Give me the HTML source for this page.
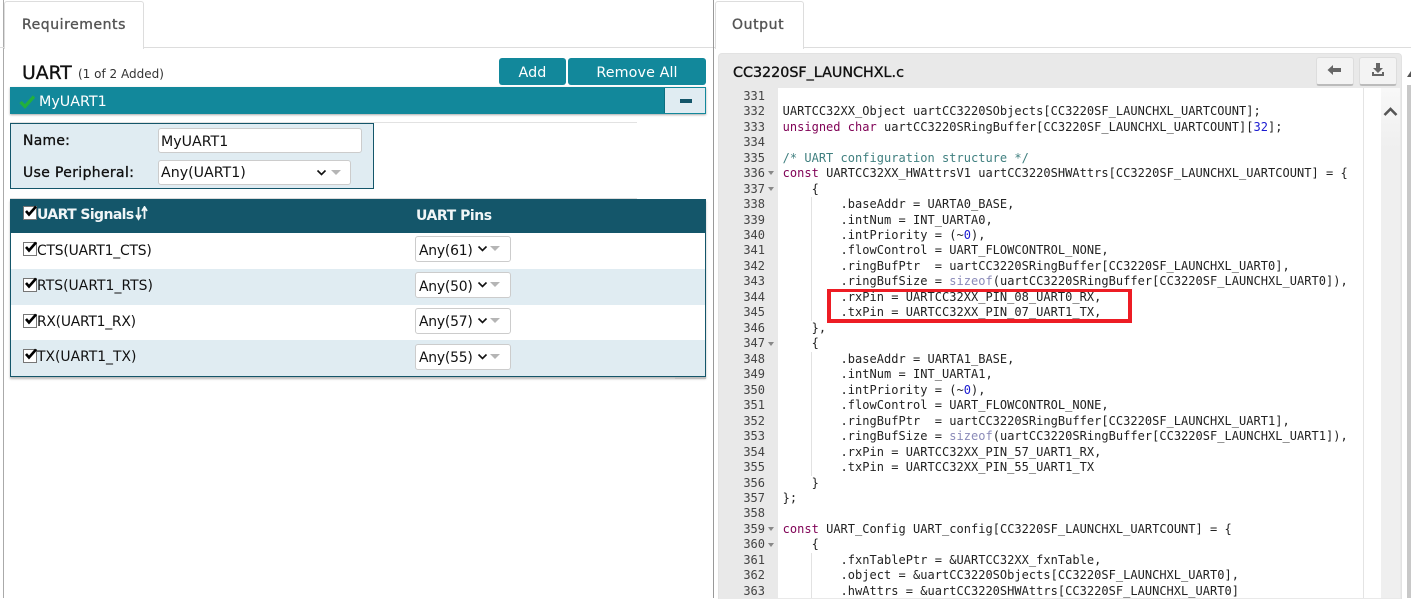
<!DOCTYPE html>
<html><head><meta charset="utf-8"><style>
html,body{margin:0;padding:0;background:#fff}
body{width:1411px;height:598px;overflow:hidden;position:relative;font-family:"DejaVu Sans","Liberation Sans",sans-serif;color:#111}
.a{position:absolute;white-space:nowrap}
.t{font-size:13.9px;line-height:20px;color:#111}
.m{-webkit-text-stroke:.35px currentColor}
.btn{background:#12889b;color:#fff;text-align:center;font-size:14.3px;line-height:31px;height:27px;top:58px;border-radius:3px;letter-spacing:.1px}
.sel{background:#fff;border:1px solid #ccc;border-radius:3px;box-sizing:border-box}
.sel i{position:absolute;top:8px;width:0;height:0;border-left:5px solid transparent;border-right:5px solid transparent;border-top:5px solid #b5b5b5}
.sel svg{position:absolute;top:7px}
.cb{position:absolute;width:12px;height:12px;border:1px solid #767676;background:#fff}
.cb svg{position:absolute;left:0;top:-3px}
.ln,.cd{position:absolute;font-family:"DejaVu Sans Mono","Liberation Mono",monospace;font-size:12px;line-height:15.47px;white-space:pre}
.ln{left:718px;top:88.8px;width:47px;text-align:right;color:#444}
.cd{left:782.6px;top:88.8px;color:#222;letter-spacing:.02px}
.k{color:#7f0055}.c{color:#3f7f7f}.n{color:#1a1ad0}.s{color:#8a8ab8}
.fold{width:0;height:0;border-left:3px solid transparent;border-right:3px solid transparent;border-top:4px solid #888;left:768px}
.g{width:1px;background:#e2e2e2}
</style></head><body>

<div class="a" style="left:3px;top:0;width:1px;height:598px;background:#aaa"></div>
<div class="a" style="left:0;top:47px;width:714px;height:1px;background:#ddd"></div>
<div class="a" style="left:713px;top:0;width:1px;height:598px;background:#999"></div>
<div class="a" style="left:714px;top:47px;width:697px;height:1px;background:#ddd"></div>

<div class="a" style="left:4px;top:1px;width:138px;height:47px;background:#fff;border:1px solid #ddd;border-bottom:none;border-radius:3px 3px 0 0"></div>
<div class="a m" style="left:22px;top:15px;font-size:14px;line-height:20px;color:#555;letter-spacing:.55px">Requirements</div>
<div class="a" style="left:715px;top:1px;width:87px;height:47px;background:#fff;border:1px solid #ddd;border-bottom:none;border-radius:3px 3px 0 0"></div>
<div class="a m" style="left:732px;top:15px;font-size:14px;line-height:20px;color:#555;letter-spacing:.6px">Output</div>

<div class="a m" style="left:22px;top:62px;font-size:18.8px;line-height:24px;color:#111">UART</div>
<div class="a" style="left:78px;top:65px;font-size:12px;line-height:18px;color:#333">(1 of 2 Added)</div>
<div class="a btn" style="left:499px;width:67px">Add</div>
<div class="a btn" style="left:568px;width:138px">Remove All</div>

<div class="a" style="left:10px;top:87px;width:696px;height:27px;background:#12889b;box-shadow:0 1px 2px #aaa"></div>
<svg class="a" style="left:19px;top:94px" width="17" height="15" viewBox="0 0 17 15"><path d="M1.5 8 L6 12.5 L15 2.5" fill="none" stroke="#22b03c" stroke-width="3.2"/></svg>
<div class="a" style="left:39px;top:92px;font-size:14.3px;line-height:20px;color:#fff">MyUART1</div>
<div class="a" style="left:664px;top:88px;width:41px;height:25px;background:#e0ecf2;border-left:1px solid #0d6f80;box-sizing:border-box"></div>
<div class="a" style="left:680px;top:99px;width:12px;height:4px;background:#14566a"></div>

<div class="a" style="left:10px;top:122px;width:627px;height:1px;background:#e2e2e2"></div>
<div class="a" style="left:10px;top:123px;width:362px;height:64px;background:#e0ecf2;border:1px solid #14566a"></div>
<div class="a t m" style="left:23px;top:131px;letter-spacing:.3px">Name:</div>
<div class="a t m" style="left:23px;top:163px;letter-spacing:.4px">Use Peripheral:</div>
<div class="a sel" style="left:158px;top:128px;width:204px;height:25px"></div>
<div class="a t" style="left:161px;top:132px;font-size:14.2px">MyUART1</div>
<div class="a sel" style="left:158px;top:160px;width:193px;height:25px">
 <svg style="left:157px;top:8px" width="12" height="8"><path d="M1.5 1.5 L5.5 5.5 L9.5 1.5" fill="none" stroke="#111" stroke-width="1.6"/></svg><i style="left:172px;top:9px"></i></div>
<div class="a t" style="left:161px;top:163px;font-size:14.2px">Any(UART1)</div>

<div class="a" style="left:10px;top:198px;width:627px;height:1px;background:#ddd"></div>
<div class="a" style="left:675px;top:375px;width:31px;height:4px;background:#ccc"></div>
<div class="a" style="left:10px;top:199px;width:694px;height:176px;background:#fff;border:1px solid #14566a;box-shadow:0 2px 2px #bbb"></div>
<div class="a" style="left:10px;top:199px;width:696px;height:34px;background:#14566a"></div>
<div class="a" style="left:11px;top:269px;width:694px;height:36px;background:#e0ecf2"></div>
<div class="a" style="left:11px;top:340px;width:694px;height:36px;background:#e0ecf2"></div>

<div class="cb" style="left:23px;top:206px"><svg width="14" height="14"><path d="M2 7 L5 10.5 L12 2.5" fill="none" stroke="#000" stroke-width="2.6"/></svg></div>
<div class="a" style="left:37px;top:205px;font-size:14px;line-height:20px;font-weight:bold;color:#f0f5f7;letter-spacing:-.6px">UART Signals</div>
<svg class="a" style="left:135px;top:206px" width="14" height="15"><path d="M3.5 1v11M1 9l2.5 4 2.5-4M9.5 13V2M7 5L9.5 1 12 5" fill="none" stroke="#f0f5f7" stroke-width="1.8"/></svg>
<div class="a" style="left:416px;top:206px;font-size:14px;line-height:20px;font-weight:bold;color:#f0f5f7;letter-spacing:-.45px">UART Pins</div>

<div class="cb" style="left:23px;top:242px"><svg width="14" height="14"><path d="M2 7 L5 10.5 L12 2.5" fill="none" stroke="#000" stroke-width="2.6"/></svg></div>
<div class="a t" style="left:37px;top:241px;letter-spacing:-.2px">CTS(UART1_CTS)</div>
<div class="a sel" style="left:415px;top:236px;width:96px;height:26px"><svg style="left:61px;top:8px" width="12" height="8"><path d="M1.5 1.5 L5.5 5.5 L9.5 1.5" fill="none" stroke="#111" stroke-width="1.6"/></svg><i style="left:74px;top:9px"></i></div>
<div class="a t" style="left:419px;top:241px;letter-spacing:-.2px">Any(61)</div>

<div class="cb" style="left:23px;top:278px"><svg width="14" height="14"><path d="M2 7 L5 10.5 L12 2.5" fill="none" stroke="#000" stroke-width="2.6"/></svg></div>
<div class="a t" style="left:37px;top:276px;letter-spacing:.05px">RTS(UART1_RTS)</div>
<div class="a sel" style="left:415px;top:272px;width:96px;height:26px"><svg style="left:61px;top:8px" width="12" height="8"><path d="M1.5 1.5 L5.5 5.5 L9.5 1.5" fill="none" stroke="#111" stroke-width="1.6"/></svg><i style="left:74px;top:9px"></i></div>
<div class="a t" style="left:419px;top:277px;letter-spacing:-.2px">Any(50)</div>

<div class="cb" style="left:23px;top:314px"><svg width="14" height="14"><path d="M2 7 L5 10.5 L12 2.5" fill="none" stroke="#000" stroke-width="2.6"/></svg></div>
<div class="a t" style="left:37px;top:312px;letter-spacing:-.25px">RX(UART1_RX)</div>
<div class="a sel" style="left:415px;top:308px;width:96px;height:26px"><svg style="left:61px;top:8px" width="12" height="8"><path d="M1.5 1.5 L5.5 5.5 L9.5 1.5" fill="none" stroke="#111" stroke-width="1.6"/></svg><i style="left:74px;top:9px"></i></div>
<div class="a t" style="left:419px;top:312px;letter-spacing:-.2px">Any(57)</div>

<div class="cb" style="left:23px;top:349px"><svg width="14" height="14"><path d="M2 7 L5 10.5 L12 2.5" fill="none" stroke="#000" stroke-width="2.6"/></svg></div>
<div class="a t" style="left:37px;top:347px">TX(UART1_TX)</div>
<div class="a sel" style="left:415px;top:344px;width:96px;height:26px"><svg style="left:61px;top:8px" width="12" height="8"><path d="M1.5 1.5 L5.5 5.5 L9.5 1.5" fill="none" stroke="#111" stroke-width="1.6"/></svg><i style="left:74px;top:9px"></i></div>
<div class="a t" style="left:419px;top:348px;letter-spacing:-.2px">Any(55)</div>

<!-- Output panel -->
<div class="a" style="left:718px;top:53px;width:682px;height:545px;background:#e9e9e9;border:1px solid #e2e2e2;border-bottom:none;border-radius:4px 4px 0 0"></div>
<div class="a m" style="left:733px;top:62px;font-size:14.3px;line-height:22px;color:#111">CC3220SF_LAUNCHXL.c</div>
<div class="a" style="left:1316px;top:57px;width:36px;height:26px;background:#f3f3f3;border:1px solid #ddd;border-bottom:2px solid #bbb;border-radius:3px"></div>
<svg class="a" style="left:1327px;top:64px" width="15" height="12"><path d="M0.5 6 L6 1 V4 H14 V8 H6 V11 Z" fill="#666"/></svg>
<div class="a" style="left:1359px;top:57px;width:36px;height:26px;background:#f3f3f3;border:1px solid #ddd;border-bottom:2px solid #bbb;border-radius:3px"></div>
<svg class="a" style="left:1371px;top:62px" width="14" height="15"><path d="M5 1 H9 V6 H12 L7 11 L2 6 H5 Z M1 10 H3 V12 H11 V10 H13 V14 H1 Z" fill="#666"/></svg>

<div class="a" style="left:778px;top:88px;width:603px;height:510px;background:#fff"></div>
<div class="a" style="left:1363px;top:88px;width:1px;height:510px;background:#e4e4e4"></div>
<div class="a" style="left:1381px;top:88px;width:19px;height:510px;background:linear-gradient(#f8f8f8,#efefef 60px)"></div>
<svg class="a" style="left:1383px;top:106px" width="15" height="11"><path d="M1.5 9 L7.5 3 L13.5 9" fill="none" stroke="#555" stroke-width="2.6"/></svg>
<div class="a" style="left:1407px;top:85px;width:4px;height:513px;background:#c8c8c8"></div>
<svg class="a" style="left:1407px;top:70px" width="4" height="8"><path d="M0 7 L4 1 V7Z" fill="#555"/></svg>

<div class="ln">331
332
333
334
335
336
337
338
339
340
341
342
343
344
345
346
347
348
349
350
351
352
353
354
355
356
357
358
359
360
361
362
363</div>
<div class="a fold" style="top:171px"></div>
<div class="a fold" style="top:187px"></div>
<div class="a fold" style="top:342px"></div>
<div class="a fold" style="top:527px"></div>
<div class="a fold" style="top:543px"></div>

<div class="a g" style="left:811px;top:197px;height:124px"></div>
<div class="a g" style="left:811px;top:352px;height:124px"></div>
<div class="a g" style="left:811px;top:553px;height:45px"></div>

<div class="a" style="left:827px;top:289px;width:297px;height:27px;border:4px solid #ed1c24;border-top-width:3px"></div>

<div class="cd">
UARTCC32XX_Object uartCC3220SObjects[CC3220SF_LAUNCHXL_UARTCOUNT];
<span class="k">unsigned char</span> uartCC3220SRingBuffer[CC3220SF_LAUNCHXL_UARTCOUNT][<span class="n">32</span>];

<span class="c">/* UART configuration structure */</span>
<span class="k">const</span> UARTCC32XX_HWAttrsV1 uartCC3220SHWAttrs[CC3220SF_LAUNCHXL_UARTCOUNT] = {
    {
        .baseAddr = UARTA0_BASE,
        .intNum = INT_UARTA0,
        .intPriority = (~<span class="n">0</span>),
        .flowControl = UART_FLOWCONTROL_NONE,
        .ringBufPtr  = uartCC3220SRingBuffer[CC3220SF_LAUNCHXL_UART0],
        .ringBufSize = <span class="s">sizeof</span>(uartCC3220SRingBuffer[CC3220SF_LAUNCHXL_UART0]),
        .rxPin = UARTCC32XX_PIN_08_UART0_RX,
        .txPin = UARTCC32XX_PIN_07_UART1_TX,
    },
    {
        .baseAddr = UARTA1_BASE,
        .intNum = INT_UARTA1,
        .intPriority = (~<span class="n">0</span>),
        .flowControl = UART_FLOWCONTROL_NONE,
        .ringBufPtr  = uartCC3220SRingBuffer[CC3220SF_LAUNCHXL_UART1],
        .ringBufSize = <span class="s">sizeof</span>(uartCC3220SRingBuffer[CC3220SF_LAUNCHXL_UART1]),
        .rxPin = UARTCC32XX_PIN_57_UART1_RX,
        .txPin = UARTCC32XX_PIN_55_UART1_TX
    }
};

<span class="k">const</span> UART_Config UART_config[CC3220SF_LAUNCHXL_UARTCOUNT] = {
    {
        .fxnTablePtr = &amp;UARTCC32XX_fxnTable,
        .object = &amp;uartCC3220SObjects[CC3220SF_LAUNCHXL_UART0],
        .hwAttrs = &amp;uartCC3220SHWAttrs[CC3220SF_LAUNCHXL_UART0]
</div>
</body></html>
